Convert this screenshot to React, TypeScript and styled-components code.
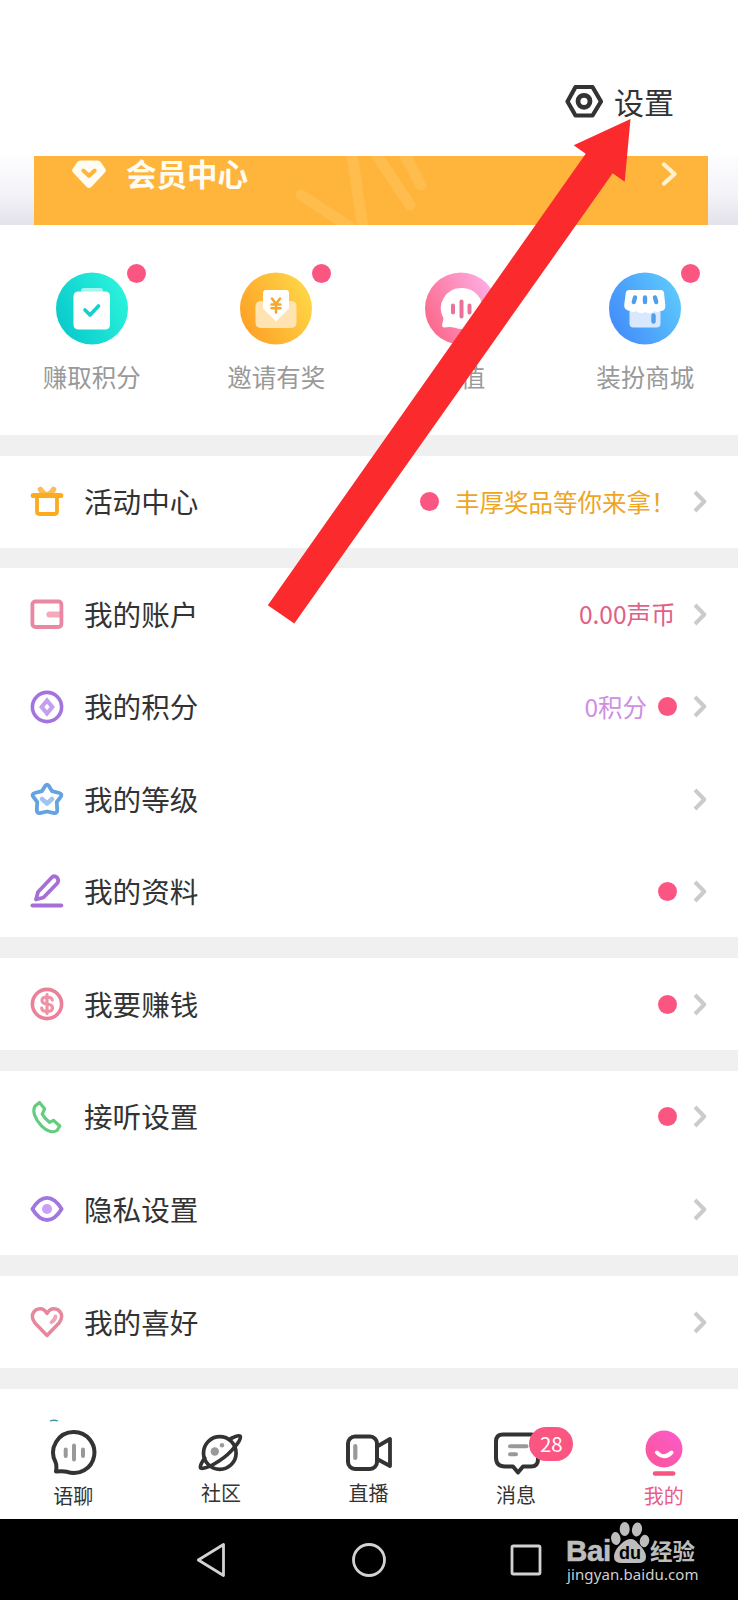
import React from "react";
import styled, { createGlobalStyle } from "styled-components";

const GlobalStyle = createGlobalStyle`
  body {
    margin: 0;
    background: #fff;
    font-family: "Noto Sans CJK SC", "Noto Sans", sans-serif;
    color: #333;
  }
`;

const Screen = styled.div`
  position: relative;
  width: 738px;
  height: 1600px;
  overflow: hidden;
  display: flex;
  flex-direction: column;
  background: #fff;
`;

const Header = styled.header`
  height: 156px;
  flex: none;
  box-sizing: border-box;
  padding: 81px 64px 0 0;
  display: flex;
  justify-content: flex-end;
  align-items: flex-start;
`;

const SettingsButton = styled.div`
  display: flex;
  align-items: center;
  gap: 11px;
  height: 40px;
  font-size: 30px;
  line-height: 40px;
`;

const BannerArea = styled.div`
  height: 69px;
  flex: none;
  padding: 0 30.5px 0 34px;
  background: linear-gradient(#fdfcfe, #f4f3f8 55%, #e3e2ea);
`;

const Banner = styled.div`
  position: relative;
  height: 69px;
  box-sizing: border-box;
  padding: 0 29.5px 34px 37.5px;
  display: flex;
  align-items: center;
  background: #ffb53b;
`;

const BannerTitle = styled.span`
  flex: 1;
  margin: -2px 0 0 20.5px;
  font-size: 30.5px;
  line-height: 34px;
  font-weight: 700;
  color: #fffdf3;
`;

const BannerArt = styled.svg`
  position: absolute;
  left: 256px;
  top: 0;
`;

const QuickGrid = styled.div`
  height: 210px;
  flex: none;
  display: grid;
  grid-template-columns: repeat(4, 184.5px);
`;

const QuickItem = styled.div`
  padding-top: 47px;
  display: flex;
  flex-direction: column;
  align-items: center;
`;

const QuickIcon = styled.div`
  position: relative;
  width: 72px;
  height: 73px;
  margin-left: -1px;
`;

const QuickLabel = styled.span`
  margin-top: 14px;
  margin-left: -1px;
  font-size: 24.5px;
  line-height: 36px;
  color: #999;
`;

const Dot = styled.span`
  width: 19px;
  height: 19px;
  border-radius: 50%;
  background: #fb5582;
`;

const CornerDot = styled(Dot)`
  position: absolute;
  left: 71.5px;
  top: -8px;
`;

const Gap = styled.div`
  height: 20.5px;
  flex: none;
  background: #f0f0f0;
`;

const Row = styled.div`
  height: 92.3px;
  flex: none;
  box-sizing: border-box;
  padding: 0 30px 0 30px;
  display: flex;
  align-items: center;
`;

const RowLabel = styled.span`
  margin: -1px 0 0 20px;
  flex: 1;
  font-size: 28.6px;
  line-height: 40px;
`;

const RowValue = styled.span<{ $color: string }>`
  font-size: 24.5px;
  line-height: 36px;
  color: ${(p) => p.$color};
`;

const RowExtras = styled.div<{ $endsWithText: boolean }>`
  display: flex;
  align-items: center;
  gap: 11px;
  margin-right: ${(p) => (p.$endsWithText ? 17.5 : 16)}px;
`;

const LeadingDot = styled(Dot)`
  margin-right: 5px;
`;

const TabBar = styled.nav`
  height: 130.5px;
  flex: none;
  display: grid;
  grid-template-columns: repeat(5, 147.6px);
`;

const Tab = styled.div<{ $active?: boolean; $lift: number }>`
  position: relative;
  padding-top: 40px;
  display: flex;
  flex-direction: column;
  align-items: center;
  font-size: 20px;
  line-height: 28px;
  color: ${(p) => (p.$active ? "#e85c8a" : "#333")};

  span {
    margin-top: ${(p) => 3 - p.$lift}px;
    margin-left: -1px;
  }
`;

const Badge = styled.b`
  position: absolute;
  left: 86.5px;
  top: 38px;
  width: 44px;
  height: 34px;
  border-radius: 17px;
  background: #fb5582;
  color: #fff;
  font-size: 20.5px;
  font-weight: 400;
  line-height: 32px;
  text-align: center;
`;

const LoadingMark = styled.svg`
  position: absolute;
  left: 49px;
  top: 30px;
`;

const SystemBar = styled.footer`
  height: 82px;
  flex: 1;
  padding-left: 195px;
  display: flex;
  align-items: center;
  background: #000;
`;

const SystemIcon = styled.svg`
  flex: none;
  margin-right: 121px;
`;

const Watermark = styled.div`
  position: absolute;
  left: 566px;
  top: 1519px;
  width: 140px;
  color: #bdbdbd;
`;

const WatermarkBrand = styled.div`
  height: 46px;
  display: flex;
  align-items: flex-end;
`;

const BrandLatin = styled.span`
  width: 45px;
  font: 700 29.5px/29px "Liberation Sans", sans-serif;
  letter-spacing: -0.3px;
  -webkit-text-stroke: 0.6px #bdbdbd;
`;

const BrandChinese = styled.span`
  font-size: 22.5px;
  line-height: 30px;
  font-weight: 700;
`;

const WatermarkUrl = styled.div`
  margin-left: 1px;
  font: 400 15px/18px "Noto Sans", sans-serif;
  letter-spacing: 0.1px;
  color: #d0d0d0;
`;

const PointerArrow = styled.svg`
  position: absolute;
  left: 0;
  top: 0;
  pointer-events: none;
`;

const Chevron = () => (
  <svg width="15" height="23" viewBox="0 0 15 23" fill="none" stroke="#cbcbcb" strokeWidth="4" strokeLinejoin="round">
    <path d="M2 2 11.300 11.500 2 21" />
  </svg>
);

const RowIcon = ({ color, children }: { color: string; children: React.ReactNode }) => (
  <svg width="34" height="34" viewBox="0 0 34 34" fill="none" stroke={color} strokeWidth="3.8" strokeLinecap="round" strokeLinejoin="round">
    {children}
  </svg>
);

const icons = {
  gift: (
    <RowIcon color="#fbab1c">
      <path d="M10.500 4.500q2.500 4.500 6.500 5.500 4-1 6.500-5.500" stroke="#fcbd58" strokeWidth="5.600" />
      <path d="M7 10v16.500q0 2.500 2.500 2.500h15q2.500 0 2.500-2.500V10" />
      <path d="M3.300 10.500h27.400" strokeWidth="5.200" />
    </RowIcon>
  ),
  wallet: (
    <RowIcon color="#ea87a2">
      <path d="M19.500 17.500H30" stroke="#f6a9bb" strokeWidth="6.200" />
      <rect x="2.400" y="4.500" width="29" height="25.500" rx="3" />
    </RowIcon>
  ),
  points: (
    <RowIcon color="#a374e0">
      <circle cx="17" cy="17" r="14.600" strokeWidth="3.600" />
      <path d="m17 10.500 5.300 6.500-5.300 6.500-5.300-6.500Z" stroke="#c49ff0" strokeWidth="4.200" strokeLinejoin="miter" />
    </RowIcon>
  ),
  star: (
    <RowIcon color="#65a3e0">
      <path d="M15.300 3.700q1.700-2 3.400 0l3.400 5.500 7.200 1.800q3 .9 1.700 3.400l-4.200 5.600.4 8.500q-.3 3-3 2.600L17 29.500l-7.200 1.600q-2.700.4-3-2.600l.4-8.500L3 14.400q-1.300-2.500 1.700-3.400l7.200-1.800Z" />
      <path d="m12 17 5 4.500 5-4.500" stroke="#9dc4f2" strokeWidth="4.600" />
    </RowIcon>
  ),
  pencil: (
    <RowIcon color="#a56fd7">
      <path d="M6 25.500 8 18 21.500 3.700Q24 1 27 3.500 29.500 6.500 27 9.500L13.500 23.500Z" />
      <path d="M2.400 31.500h29" strokeWidth="3.800" />
    </RowIcon>
  ),
  dollar: (
    <RowIcon color="#ea8099">
      <circle cx="17" cy="17" r="14.600" strokeWidth="3.600" />
      <g stroke="#ee92a6" strokeWidth="3.200">
        <path d="M22.300 13q-.6-3-5.300-3-5 0-5 3.500 0 3 5 3.500 5.500.6 5.500 3.900 0 3.500-5.500 3.500-4.800 0-5.300-3.200M17 7.500v19" />
      </g>
    </RowIcon>
  ),
  phone: (
    <RowIcon color="#62cd7f">
      <path d="M9.500 2.500 4.900 6.300C2.400 11 4.400 18.500 11.500 25.900 17 31.500 23 33 27 30.500l2.800-4.500-6.400-5.700-3.800 2.100C17 20.500 14 17.500 12.200 14.100L14.600 8.800Z" strokeWidth="3.200" />
    </RowIcon>
  ),
  eye: (
    <RowIcon color="#a276df">
      <path d="M2.400 17Q9 5.800 17 5.800T31.600 17Q25 28 17 28T2.400 17Z" />
      <circle cx="17" cy="17" r="5" fill="#ca9ff8" stroke="none" />
    </RowIcon>
  ),
  heart: (
    <RowIcon color="#e5879d">
      <path d="M17 30.500 5 18Q1.500 14 2.700 9 5 3.700 10.200 3.700q4.300 0 6.800 4.800 2.500-4.800 6.800-4.800 5.200 0 7.500 5.300 1.200 5-2.300 9Z" strokeWidth="3.500" />
      <path d="M25.500 11.500q-.2 3-4 5.700" stroke="#f0a5b6" />
    </RowIcon>
  ),
};

const Orb = ({ id, from, to, children }: { id: string; from: string; to: string; children: React.ReactNode }) => (
  <svg width="72" height="73" viewBox="0 0 72 72">
    <defs>
      <linearGradient id={id} x1="0" y1="0.75" x2="1" y2="0.25">
        <stop stopColor={from} />
        <stop offset="1" stopColor={to} />
      </linearGradient>
    </defs>
    <circle cx="36" cy="36" r="36" fill={`url(#${id})`} />
    {children}
  </svg>
);

const quickItems = [
  {
    label: "赚取积分",
    dot: true,
    icon: (
      <Orb id="teal" from="#08c9cb" to="#2cf4dc">
        <path d="M25 21v-3q0-2.500 3-2.500h16q3 0 3 2.500v3Z" fill="#a3f5ed" />
        <path d="M23 19h26q5 0 5 5v28q0 5-5 5H23q-5.500 0-5.500-5V24q0-5 5.500-5Z" fill="#fff" />
        <path d="m29 37.500 5 5 8.500-9" fill="none" stroke="#15cfca" strokeWidth="3.600" strokeLinecap="round" strokeLinejoin="round" />
      </Orb>
    ),
  },
  {
    label: "邀请有奖",
    dot: true,
    icon: (
      <Orb id="gold" from="#ff9f25" to="#fed847">
        <rect x="15.500" y="28.500" width="41" height="27" rx="5" fill="#ffe4b2" />
        <path d="M26 17.500h20q3 0 3 3v15.500L36 49 23 36V20.500q0-3 3-3Z" fill="#fff" />
        <path d="m32 26 4 5.500 4-5.500M36 31.500V40M31.500 32h9M31.500 35.800h9" fill="none" stroke="#f7a52b" strokeWidth="2.500" strokeLinecap="round" />
      </Orb>
    ),
  },
  {
    label: "充值",
    dot: false,
    icon: (
      <Orb id="rose" from="#fb6688" to="#ffb0e8">
        <path d="M37 15.500a20.500 20.500 0 1 1-7 39.700q-5-1.200-10.500-.2-3 0-2.300-3l1.300-6A20.500 20.500 0 0 1 37 15.500Z" fill="#fff" />
        <path d="M28 33v7M36.500 29v15M44.500 33v7" stroke="#ec7198" strokeWidth="4" strokeLinecap="round" />
      </Orb>
    ),
  },
  {
    label: "装扮商城",
    dot: true,
    icon: (
      <Orb id="sky" from="#438bfa" to="#5dcafd">
        <path d="M20.500 34h31v17q0 4-4 4h-23q-4 0-4-4Z" fill="#d7e8ff" />
        <path d="M20 17.500h32q2.500 0 3 3l1.300 12q.5 6-5 6-3 2-6 0-4 4-9 1-5 3-9-1-3.500 2-6 0-7-1-6-7l1.500-11q.5-3 3.200-3Z" fill="#fff" />
        <path d="m26 25-1.200 4.500M36 25v4.500M46 25l1.200 4.500M44.500 43V49" stroke="#4f9fe8" strokeWidth="4.400" strokeLinecap="round" />
      </Orb>
    ),
  },
];

type RowData = { label: string; icon: keyof typeof icons; value?: string; color?: string; dot?: "before" | "after" };

const sections: RowData[][] = [
  [{ label: "活动中心", icon: "gift", value: "丰厚奖品等你来拿！", color: "#eea51f", dot: "before" }],
  [
    { label: "我的账户", icon: "wallet", value: "0.00声币", color: "#e06086" },
    { label: "我的积分", icon: "points", value: "0积分", color: "#cf8ee4", dot: "after" },
    { label: "我的等级", icon: "star" },
    { label: "我的资料", icon: "pencil", dot: "after" },
  ],
  [{ label: "我要赚钱", icon: "dollar", dot: "after" }],
  [
    { label: "接听设置", icon: "phone", dot: "after" },
    { label: "隐私设置", icon: "eye" },
  ],
  [{ label: "我的喜好", icon: "heart" }],
];

const TabIcon = ({ children }: { children: React.ReactNode }) => (
  <svg width="48" height="50" viewBox="0 0 48 50" fill="none" stroke="#333" strokeWidth="4" strokeLinecap="round" strokeLinejoin="round">
    {children}
  </svg>
);

const tabs = [
  {
    label: "语聊",
    lift: 0,
    icon: (
      <TabIcon>
        <path d="M24 3a20.500 20.500 0 1 1-7 39.800q-4-1-11-.3 1-6-.5-9.500A20.500 20.500 0 0 1 24 3Z" />
        <path d="M15.700 20.500v6.500M24 16.500v14M33 20.500v6.500" stroke="#999" />
      </TabIcon>
    ),
  },
  {
    label: "社区",
    lift: 3,
    icon: (
      <TabIcon>
        <circle cx="22.800" cy="24" r="16.300" strokeWidth="3.700" />
        <path d="M34 9.500q7.500-4 9.200-2.200 1.200 3-5.200 10.200-6.500 8.500-16 14.500-13.500 8.800-18.300 7-1.700-1.800 4-10" strokeWidth="3.700" />
        <circle cx="17.800" cy="22.500" r="4.200" fill="#999" stroke="none" />
        <circle cx="25" cy="16.300" r="2.200" fill="#999" stroke="none" />
      </TabIcon>
    ),
  },
  {
    label: "直播",
    lift: 3,
    icon: (
      <TabIcon>
        <rect x="3" y="7.500" width="29" height="32.500" rx="7" />
        <path d="m33 17 12-7v27L33 30.500" strokeWidth="3.800" />
        <path d="M10.300 17v12" stroke="#999" strokeWidth="4.200" />
      </TabIcon>
    ),
  },
  {
    label: "消息",
    lift: 1,
    icon: (
      <TabIcon>
        <path d="M10 5.500h28q7 0 7 7v18q0 7-7 7h-8L25 43.500l-5-6H12q-9 0-9-9v-16q0-7 7-7Z" />
        <path d="M17 17.300h16.500M17 25.300H23" stroke="#999" />
      </TabIcon>
    ),
  },
  {
    label: "我的",
    lift: 0,
    active: true,
    icon: (
      <TabIcon>
        <defs>
          <linearGradient id="profile" x1="0" y1="1" x2="0.800" y2="0">
            <stop stopColor="#fb5596" />
            <stop offset="1" stopColor="#fb5bc8" />
          </linearGradient>
        </defs>
        <circle cx="24" cy="20" r="18.500" fill="url(#profile)" stroke="none" />
        <path d="M17 23.500q7 7.500 14.500 0" stroke="#fff" />
        <path d="M15 44.600h18.200" stroke="#f65581" strokeWidth="4.500" />
      </TabIcon>
    ),
  },
];

export default function App() {
  return (
    <Screen lang="zh-CN">
      <GlobalStyle />
      <Header>
        <SettingsButton>
          <svg width="38" height="34" viewBox="0 0 38 34" fill="none" stroke="#333" strokeWidth="4.200" strokeLinejoin="round">
            <path d="M10.500 3h17L36 17.500l-8.500 14h-17L2.500 17.500Z" />
            <circle cx="19" cy="17.300" r="6" strokeWidth="4.800" />
          </svg>
          设置
        </SettingsButton>
      </Header>
      <BannerArea>
        <Banner>
          <BannerArt width="150" height="69" fill="none" stroke="#ffbd4e" strokeWidth="11" strokeLinecap="round">
            <path d="m11 39 49 32M61-8l12 80M82-8l38 57M111-8l20 37" />
          </BannerArt>
          <svg width="34" height="30" viewBox="0 0 34 30">
            <path d="M8.500 1.500h17q2 0 3.200 1.600l4.400 6.400q1.500 2-.2 4L19.300 28q-2.300 2-4.600 0L1.100 13.500q-1.700-2-.2-4l4.400-6.400Q6.500 1.500 8.500 1.500Z" fill="#fffdf3" />
            <path d="m11.300 11.500 5.700 5.300 5.700-5.300" fill="none" stroke="#ffb53b" strokeWidth="4" strokeLinecap="round" strokeLinejoin="round" />
          </svg>
          <BannerTitle>会员中心</BannerTitle>
          <svg width="17" height="25" fill="none" stroke="#fff2cc" strokeWidth="4.200" strokeLinecap="round" strokeLinejoin="round">
            <path d="m3 3.500 10.500 9.500L3 22.500" />
          </svg>
        </Banner>
      </BannerArea>
      <QuickGrid>
        {quickItems.map((item) => (
          <QuickItem key={item.label}>
            <QuickIcon>
              {item.icon}
              {item.dot && <CornerDot />}
            </QuickIcon>
            <QuickLabel>{item.label}</QuickLabel>
          </QuickItem>
        ))}
      </QuickGrid>
      <Gap />
      {sections.map((rows) => (
        <React.Fragment key={rows[0].label}>
          {rows.map((row) => (
            <Row key={row.label}>
              {icons[row.icon]}
              <RowLabel>{row.label}</RowLabel>
              <RowExtras $endsWithText={row.dot !== "after"}>
                {row.dot === "before" && <LeadingDot />}
                {row.value && <RowValue $color={row.color ?? "#333"}>{row.value}</RowValue>}
                {row.dot === "after" && <Dot />}
              </RowExtras>
              <Chevron />
            </Row>
          ))}
          <Gap />
        </React.Fragment>
      ))}
      <TabBar>
        {tabs.map((tab, i) => (
          <Tab key={tab.label} $active={tab.active} $lift={tab.lift}>
            {i === 0 && (
              <LoadingMark width="10" height="4" fill="none" stroke="#3d96a5" strokeWidth="1.300">
                <path d="M1 2q4-1.500 8 0" />
              </LoadingMark>
            )}
            {tab.icon}
            <span>{tab.label}</span>
            {tab.label === "消息" && <Badge>28</Badge>}
          </Tab>
        ))}
      </TabBar>
      <SystemBar>
        <SystemIcon width="32" height="36" fill="none" stroke="#d2d2d2" strokeWidth="2.800" strokeLinejoin="round">
          <path d="M28.500 2.500v31L3.300 18Z" />
        </SystemIcon>
        <SystemIcon width="38" height="36" fill="none" stroke="#d2d2d2" strokeWidth="2.800">
          <circle cx="21" cy="18" r="15.500" />
        </SystemIcon>
        <SystemIcon width="36" height="36" fill="none" stroke="#d2d2d2" strokeWidth="2.800">
          <rect x="5" y="4" width="28" height="28" rx="1.500" />
        </SystemIcon>
      </SystemBar>
      <Watermark>
        <WatermarkBrand>
          <BrandLatin>Bai</BrandLatin>
          <svg width="39" height="44" viewBox="0 0 39 44" fill="#bdbdbd">
            <ellipse cx="4.800" cy="17.500" rx="4.700" ry="6.500" transform="rotate(-8 4.800 17.500)" />
            <ellipse cx="13.700" cy="8" rx="5" ry="7" />
            <ellipse cx="26" cy="8.500" rx="5" ry="7" transform="rotate(10 26 8.500)" />
            <ellipse cx="33.500" cy="20" rx="4.700" ry="6.200" transform="rotate(12 33.500 20)" />
            <path d="M20 18q4 0 7 4.500 8 7 8 13.500 0 6-8 6H11q-8 0-8-6 0-7 7-13 5-5 10-5Z" />
            <text x="19" y="38" textAnchor="middle" fill="#000" fontFamily="Liberation Sans, sans-serif" fontWeight="700" fontSize="18">du</text>
          </svg>
          <BrandChinese>经验</BrandChinese>
        </WatermarkBrand>
        <WatermarkUrl>jingyan.baidu.com</WatermarkUrl>
      </Watermark>
      <PointerArrow width="738" height="640">
        <path d="M630.500 119 573.700 145.300 585.700 153.700 267.800 605.300 294.300 623.500 612.700 173.300 624.700 181.800Z" fill="#fb2b2d" />
      </PointerArrow>
    </Screen>
  );
}
